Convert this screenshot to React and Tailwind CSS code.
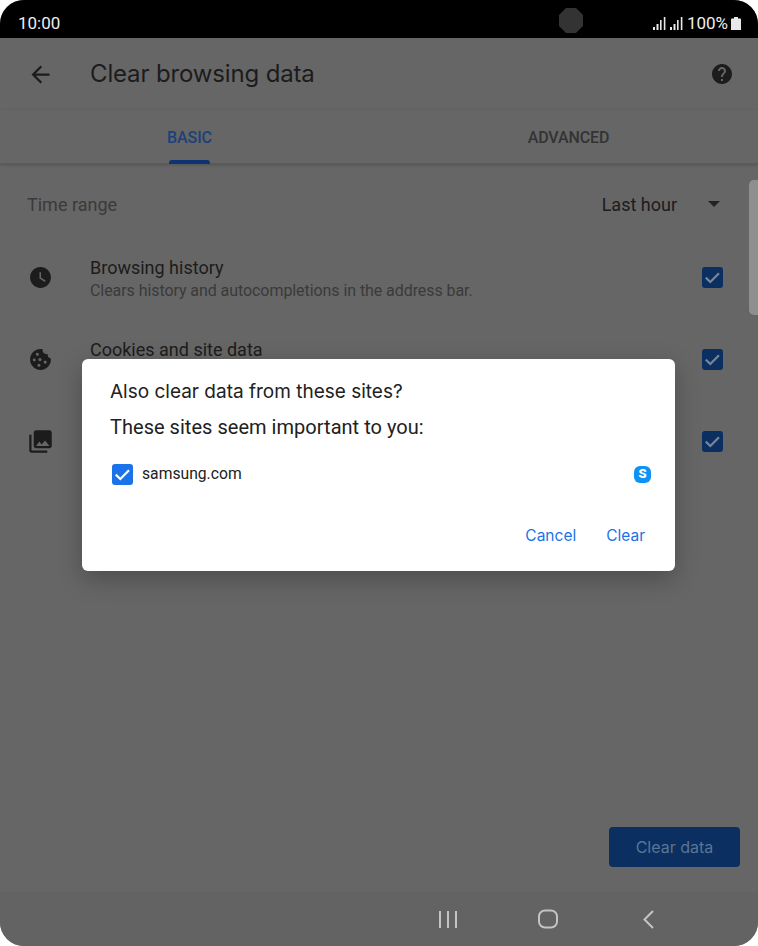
import React from 'react';

const sans = { fontFamily: 'Roboto, sans-serif' };

const rows = [
  {
    title: 'Browsing history',
    detail: 'Clears history and autocompletions in the address bar.',
    size: 25,
    icon: 'M12 2C6.5 2 2 6.5 2 12s4.5 10 10 10 10-4.5 10-10S17.5 2 12 2zm4.2 14.2L11 13V7h1.5v5.2l4.5 2.7-.8 1.3z',
  },
  {
    title: 'Cookies and site data',
    size: 25,
    icon: 'M21.95 10.99c-1.79-.03-3.7-1.95-2.68-4.22-2.97 1-5.78-1.59-5.19-4.56C7.11.74 2 6.41 2 12c0 5.52 4.48 10 10 10 5.89 0 10.54-5.08 9.95-11.01zM9 5.5a1.500 1.500 0 1 0 0 3 1.500 1.500 0 1 0 0-3zM6 11a1.400 1.400 0 1 0 0 2.800 1.400 1.400 0 1 0 0-2.800zM11.500 10.500a1.600 1.600 0 1 0 0 3.200 1.600 1.600 0 1 0 0-3.200zM16.500 13a1.500 1.500 0 1 0 0 3 1.500 1.500 0 1 0 0-3zM10.500 16a1.500 1.500 0 1 0 0 3 1.500 1.500 0 1 0 0-3z',
  },
  {
    size: 27,
    icon: 'M22 16V4c0-1.1-.9-2-2-2H8c-1.1 0-2 .9-2 2v12c0 1.1.9 2 2 2h12c1.1 0 2-.9 2-2zm-11-4l2.03 2.71L16 11l4 5H8l3-4zM2 6v14c0 1.1.9 2 2 2h14v-2H4V6H2z',
  },
];

const Check = ({ box, mark }) => (
  <svg width="21" height="21" viewBox="0 0 21 21">
    <rect width="21" height="21" rx="3" fill={box} />
    <path d="M3.800 10.700l4.500 4.300 8.700-8.700" fill="none" stroke={mark} strokeWidth="2.300" />
  </svg>
);

const Signal = () => (
  <svg width="13" height="13" viewBox="0 0 13 13" fill="#e8e8e8">
    <rect x="0" y="10" width="2" height="3" />
    <rect x="3.500" y="7" width="2" height="6" />
    <rect x="7" y="3" width="1.600" height="10" />
    <rect x="10.800" y="0" width="1.600" height="13" />
  </svg>
);

export default function App() {
  return (
    <div className="w-[758px] h-[946px] bg-white" style={sans}>
      <div className="relative w-full h-full rounded-[24px] overflow-hidden bg-[#666666] flex flex-col">
        <div className="h-[38px] shrink-0 bg-black flex items-center pl-[18px] pr-[17px] pt-[9px] text-[#eeeeee] text-[17px]">
          <span>10:00</span>
          <svg className="ml-[499px] -mt-[6px]" width="24" height="25" viewBox="0 0 24 25">
            <path d="M7 0h10l7 7v11l-7 7H7l-7-7V7z" fill="#333333" />
          </svg>
          <div className="ml-auto flex items-center gap-[4px]">
            <Signal />
            <Signal />
            <span className="mr-[-1px]">100%</span>
            <svg width="10" height="13" viewBox="0 0 10 13" fill="#e8e8e8">
              <path d="M3 0h4v1.500h2a1 1 0 0 1 1 1V13H0V2.500a1 1 0 0 1 1-1h2z" />
            </svg>
          </div>
        </div>

        <div className="h-[72px] shrink-0 flex items-center pl-[27px] pr-[24px]">
          <svg width="27" height="27" viewBox="0 0 24 24" fill="#1c1c1c">
            <path d="M20 11H7.830l5.590-5.590L12 4l-8 8 8 8 1.410-1.410L7.830 13H20v-2z" />
          </svg>
          <span className="ml-[36px] text-[24px] text-[#1c1c1c] tracking-[-0.15px]" style={{ fontFamily: 'Inter, sans-serif' }}>
            Clear browsing data
          </span>
          <svg className="ml-auto" width="24" height="24" viewBox="0 0 24 24" fill="#1c1c1c">
            <path d="M12 2C6.480 2 2 6.480 2 12s4.480 10 10 10 10-4.480 10-10S17.520 2 12 2zm1 17h-2v-2h2v2zm2.070-7.750l-.9.920C13.450 12.900 13 13.500 13 15h-2v-.5c0-1.100.45-2.100 1.170-2.830l1.240-1.260c.37-.36.59-.86.59-1.410 0-1.100-.9-2-2-2s-2 .9-2 2H8c0-2.210 1.790-4 4-4s4 1.790 4 4c0 .88-.36 1.680-.93 2.250z" />
          </svg>
        </div>

        <div className="h-[54px] shrink-0 flex border-b border-[#5c5c5c] shadow-[0_1px_3px_rgba(0,0,0,0.2)] text-[16px] font-medium tracking-[-0.1px]">
          <div className="w-[379px] relative flex items-center justify-center pt-[2px] text-[#1b417a]">
            BASIC
            <div className="absolute -bottom-px left-[169px] w-[41px] h-[4px] rounded-t-[3px] bg-[#0d3470]" />
          </div>
          <div className="w-[379px] flex items-center justify-center pt-[2px] text-[#333333]">ADVANCED</div>
        </div>

        <div className="absolute right-0 top-[180px] w-[9px] h-[135px] rounded-l-[5px] bg-[#8f8f8f]" />

        <div className="h-[72px] shrink-0 flex items-center pl-[27px] pr-[38px] pt-[8px] text-[18px]">
          <span className="text-[#3a3a3a]">Time range</span>
          <span className="ml-auto text-[#1c1c1c]">Last hour</span>
          <svg className="ml-[31px]" width="12" height="6" viewBox="0 0 12 6" fill="#222222">
            <path d="M0 0h12L6 6z" />
          </svg>
        </div>

        {rows.map((row) => (
          <div key={row.icon} className="h-[82px] shrink-0 flex items-center pl-[28px] pr-[35px]">
            <div className="w-[25px] h-[25px] shrink-0 flex items-center justify-center">
              <svg className="shrink-0" width={row.size} height={row.size} viewBox="0 0 24 24" fill="#1c1c1c">
                <path fillRule="evenodd" d={row.icon} />
              </svg>
            </div>
            <div className="ml-[37px] mt-[4px] flex flex-col">
              <span className="h-[23px] text-[18px] leading-[23px] text-[#1c1c1c]">{row.title}</span>
              <span className="h-[23px] text-[16px] leading-[23px] text-[#3a3a3a] tracking-[-0.07px]">{row.detail}</span>
            </div>
            <div className="ml-auto flex">
              <Check box="#0a2f60" mark="#76859a" />
            </div>
          </div>
        ))}

        <div className="flex-1 flex items-end justify-end pr-[18px] pb-[25px]">
          <button className="w-[131px] h-[40px] rounded-[4px] bg-[#0a2f60] text-[#5b7595] text-[16px]" style={{ fontFamily: 'Inter, sans-serif' }}>
            Clear data
          </button>
        </div>

        <div className="h-[54px] shrink-0 bg-[#636363] flex items-center">
          <svg className="ml-[439px]" width="18" height="17" viewBox="0 0 18 17" stroke="#c4c4c4" strokeWidth="2">
            <path d="M1 0v17M9 0v17M17 0v17" />
          </svg>
          <svg className="ml-[81px]" width="20" height="20" viewBox="0 0 20 20" fill="none" stroke="#c4c4c4" strokeWidth="2">
            <rect x="1" y="1.500" width="18" height="17" rx="6" />
          </svg>
          <svg className="ml-[85px]" width="11" height="19" viewBox="0 0 11 19" fill="none" stroke="#c4c4c4" strokeWidth="2">
            <path d="M10 1L1.500 9.500 10 18" />
          </svg>
        </div>

        <div className="absolute left-[82px] top-[359px] w-[593px] h-[212px] rounded-[6px] bg-white shadow-[0_8px_24px_rgba(0,0,0,0.25)] flex flex-col pl-[28px] pr-[24px]">
          <div className="mt-[20px] text-[19px] leading-[26px] text-[#212121]" style={{ fontFamily: 'Inter, sans-serif' }}>
            Also clear data from these sites?
          </div>
          <div className="mt-[9px] text-[20px] leading-[26px] text-[#212121] tracking-[0.03px]">
            These sites seem important to you:
          </div>
          <div className="mt-[23px] h-[22px] flex items-center">
            <div className="ml-[2px] flex">
              <Check box="#1a73e8" mark="#ffffff" />
            </div>
            <span className="ml-[9px] text-[15.700px] text-[#212121]">samsung.com</span>
            <span className="ml-auto flex items-center justify-center w-[17px] h-[17px] rounded-[6px] bg-[#0b93f6] text-white text-[13px] font-black">S</span>
          </div>
          <div className="mt-auto mb-[24px] flex justify-end gap-[30px] pr-[6px] text-[15.500px] text-[#1a73e8]" style={{ fontFamily: 'Inter, sans-serif' }}>
            <span>Cancel</span>
            <span>Clear</span>
          </div>
        </div>
      </div>
    </div>
  );
}
